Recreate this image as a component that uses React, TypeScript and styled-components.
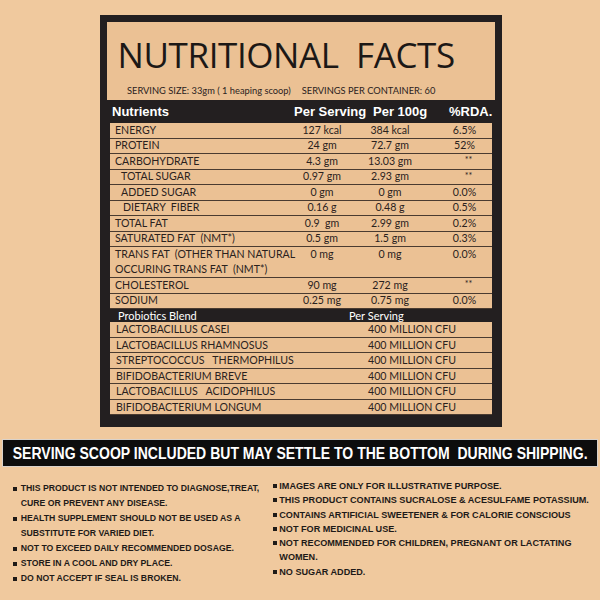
import React from 'react';
import styled, { createGlobalStyle } from 'styled-components';

const Global = createGlobalStyle`
  html, body { margin: 0; padding: 0; background: #f0c99e; }
  body { width: 600px; height: 600px; overflow: hidden; }
`;

const Page = styled.div`
  width: 600px;
  height: 600px;
  box-sizing: border-box;
  padding-top: 15px;
  background: #f0c99e;
  display: flex;
  flex-direction: column;
`;

const Frame = styled.section`
  margin-left: 100px;
  width: 402px;
  box-sizing: border-box;
  background: #231f20;
  padding: 7px 7px 12px;
  display: flex;
  flex-direction: column;
`;

const TitleArea = styled.header`
  height: 78px;
  box-sizing: border-box;
  background: #ebc194;
  padding: 15px 0 0 10.5px;
  display: flex;
  flex-direction: column;
`;

const Title = styled.h1`
  margin: 0;
  font-family: "Open Sans", sans-serif;
  font-weight: 400;
  font-size: 35px;
  line-height: 35px;
  letter-spacing: -0.4px;
  color: #1c1816;
  white-space: pre;
`;

const ServingLine = styled.div`
  margin-top: 13px;
  padding-left: 9.5px;
  display: flex;
  gap: 11px;
  font-family: Lato, sans-serif;
  font-size: 9.3px;
  line-height: 11px;
  color: #2a211d;
`;

const HeadRow = styled.div`
  display: grid;
  grid-template-columns: 183px 70px 66px 1fr;
  height: 23px;
  align-items: center;
  font-family: "Liberation Sans", Arial, sans-serif;
  font-weight: 700;
  font-size: 13px;
  color: #ffffff;
`;

const HeadCell = styled.div<{ $pad: number }>`
  padding-left: ${p => p.$pad}px;
  white-space: pre;
`;

const Row = styled.div<{ $tall?: boolean }>`
  display: grid;
  grid-template-columns: 177px 70px 66px 1fr;
  height: ${p => (p.$tall ? 30 : 14.5)}px;
  margin: 0 3px;
  background: #ebc194;
  border-bottom: 1px solid #4a3b30;
  font-family: Lato, sans-serif;
  font-size: 10.6px;
  line-height: 15.5px;
  color: #2a211d;
`;

const NameCell = styled.div<{ $indent: number }>`
  padding-left: ${p => 5 + p.$indent}px;
  white-space: pre;
  margin-top: -0.5px;
`;

const ValueCell = styled.div<{ $shift?: number }>`
  text-align: center;
  white-space: pre;
  margin-top: -0.5px;
  padding-left: ${p => p.$shift ?? 0}px;
`;

const Stars = styled.div`
  text-align: center;
  padding-left: 22px;
  font-size: 9px;
  line-height: 9px;
  padding-top: 1px;
`;

const ProbioHead = styled.div`
  display: grid;
  grid-template-columns: 231px 1fr;
  height: 13px;
  padding-left: 11px;
  font-family: Lato, sans-serif;
  font-size: 11px;
  line-height: 14px;
  color: #ffffff;
  overflow: hidden;
`;

const ProbioRow = styled.div`
  display: grid;
  grid-template-columns: 252px 1fr;
  height: 14.5px;
  margin: 0 3px;
  background: #ebc194;
  border-bottom: 1px solid #4a3b30;
  font-family: Lato, sans-serif;
  font-size: 10.6px;
  line-height: 15px;
  color: #2a211d;
`;

const ProbioCell = styled.div`
  padding-left: 6px;
  white-space: pre;
`;

const Banner = styled.div`
  margin: 12px 0 0 2px;
  width: 596px;
  height: 28px;
  box-sizing: border-box;
  background: #0d0d0d;
  border: 1px solid #d9d2cb;
  display: flex;
  align-items: center;
  justify-content: center;
  overflow: hidden;
`;

const BannerText = styled.span`
  display: inline-block;
  font-family: "Liberation Sans", Arial, sans-serif;
  font-weight: 700;
  font-size: 16.5px;
  color: #ffffff;
  white-space: pre;
  transform: scaleX(0.85);
`;

const Notes = styled.div`
  display: flex;
  padding: 14px 0 0 13px;
  font-family: "Liberation Sans", Arial, sans-serif;
  font-weight: 700;
  color: #1e1a18;
`;

const NoteList = styled.ul<{ $lh: number; $shiftY: number; $w?: number; $fs: number }>`
  list-style: none;
  margin: ${p => p.$shiftY}px 0 0;
  padding: 0;
  font-size: ${p => p.$fs}px;
  line-height: ${p => p.$lh}px;
  flex: ${p => (p.$w ? `0 0 ${p.$w}px` : '1 1 auto')};
  min-width: 0;
`;

const NoteItem = styled.li<{ $gap: number; $lh: number }>`
  display: flex;
  align-items: flex-start;
  gap: ${p => p.$gap}px;
  & > i {
    flex: none;
    width: 4px;
    height: 4px;
    margin-top: ${p => (p.$lh - 4) / 2}px;
    background: #1e1a18;
  }
`;

const NoteText = styled.span`
  white-space: pre;
`;

type Nut = { name: string[]; indent?: number; ps: string; p100: string; rda: string };

const nutrients: Nut[] = [
  { name: ['ENERGY'], ps: '127 kcal', p100: '384 kcal', rda: '6.5%' },
  { name: ['PROTEIN'], ps: '24 gm', p100: '72.7 gm', rda: '52%' },
  { name: ['CARBOHYDRATE'], ps: '4.3 gm', p100: '13.03 gm', rda: '**' },
  { name: ['TOTAL SUGAR'], indent: 6, ps: '0.97 gm', p100: '2.93 gm', rda: '**' },
  { name: ['ADDED SUGAR'], indent: 6, ps: '0 gm', p100: '0 gm', rda: '0.0%' },
  { name: ['DIETARY  FIBER'], indent: 8, ps: '0.16 g', p100: '0.48 g', rda: '0.5%' },
  { name: ['TOTAL FAT'], ps: '0.9  gm', p100: '2.99 gm', rda: '0.2%' },
  { name: ['SATURATED FAT  (NMT*)'], ps: '0.5 gm', p100: '1.5 gm', rda: '0.3%' },
  {
    name: ['TRANS FAT  (OTHER THAN NATURAL', 'OCCURING TRANS FAT  (NMT*)'],
    ps: '0 mg',
    p100: '0 mg',
    rda: '0.0%',
  },
  { name: ['CHOLESTEROL'], ps: '90 mg', p100: '272 mg', rda: '**' },
  { name: ['SODIUM'], ps: '0.25 mg', p100: '0.75 mg', rda: '0.0%' },
];

const probiotics = [
  'LACTOBACILLUS CASEI',
  'LACTOBACILLUS RHAMNOSUS',
  'STREPTOCOCCUS   THERMOPHILUS',
  'BIFIDOBACTERIUM BREVE',
  'LACTOBACILLUS   ACIDOPHILUS',
  'BIFIDOBACTERIUM LONGUM',
];

const leftNotes = [
  ['THIS PRODUCT IS NOT INTENDED TO DIAGNOSE,TREAT,', 'CURE OR PREVENT ANY DISEASE.'],
  ['HEALTH SUPPLEMENT SHOULD NOT BE USED AS A', 'SUBSTITUTE FOR VARIED DIET.'],
  ['NOT TO EXCEED DAILY RECOMMENDED DOSAGE.'],
  ['STORE IN A COOL AND DRY PLACE.'],
  ['DO NOT ACCEPT IF SEAL IS BROKEN.'],
];

const rightNotes = [
  ['IMAGES ARE ONLY FOR ILLUSTRATIVE PURPOSE.'],
  ['THIS PRODUCT CONTAINS SUCRALOSE & ACESULFAME POTASSIUM.'],
  ['CONTAINS ARTIFICIAL SWEETENER & FOR CALORIE CONSCIOUS'],
  ['NOT FOR MEDICINAL USE.'],
  ['NOT RECOMMENDED FOR CHILDREN, PREGNANT OR LACTATING', 'WOMEN.'],
  ['NO SUGAR ADDED.'],
];

function Notelist({
  items,
  lh,
  gap,
  shiftY,
  w,
  fs,
}: {
  items: string[][];
  lh: number;
  gap: number;
  shiftY: number;
  w?: number;
  fs: number;
}) {
  return (
    <NoteList $lh={lh} $shiftY={shiftY} $w={w} $fs={fs}>
      {items.map((lines, i) => (
        <NoteItem key={i} $gap={gap} $lh={lh}>
          <i />
          <NoteText>{lines.join('\n')}</NoteText>
        </NoteItem>
      ))}
    </NoteList>
  );
}

export default function App() {
  return (
    <Page>
      <Global />
      <Frame>
        <TitleArea>
          <Title>{'NUTRITIONAL  FACTS'}</Title>
          <ServingLine>
            <span>SERVING SIZE: 33gm ( 1 heaping scoop)</span>
            <span>SERVINGS PER CONTAINER: 60</span>
          </ServingLine>
        </TitleArea>
        <HeadRow>
          <HeadCell $pad={5}>Nutrients</HeadCell>
          <HeadCell $pad={4}>Per Serving</HeadCell>
          <HeadCell $pad={13}>Per 100g</HeadCell>
          <HeadCell $pad={23}>%RDA.</HeadCell>
        </HeadRow>
        {nutrients.map(n => (
          <Row key={n.name[0]} $tall={n.name.length > 1}>
            <NameCell $indent={n.indent ?? 0}>{n.name.join('\n')}</NameCell>
            <ValueCell>{n.ps}</ValueCell>
            <ValueCell>{n.p100}</ValueCell>
            {n.rda === '**' ? <Stars>**</Stars> : <ValueCell $shift={14}>{n.rda}</ValueCell>}
          </Row>
        ))}
        <ProbioHead>
          <span>Probiotics Blend</span>
          <span>Per Serving</span>
        </ProbioHead>
        {probiotics.map(p => (
          <ProbioRow key={p}>
            <ProbioCell>{p}</ProbioCell>
            <ProbioCell>400 MILLION CFU</ProbioCell>
          </ProbioRow>
        ))}
      </Frame>
      <Banner>
        <BannerText>{'SERVING SCOOP INCLUDED BUT MAY SETTLE TO THE BOTTOM  DURING SHIPPING.'}</BannerText>
      </Banner>
      <Notes>
        <Notelist items={leftNotes} lh={15} gap={3.7} shiftY={0} w={260} fs={8.7} />
        <Notelist items={rightNotes} lh={14.3} gap={2.3} shiftY={-2} fs={9.1} />
      </Notes>
    </Page>
  );
}
